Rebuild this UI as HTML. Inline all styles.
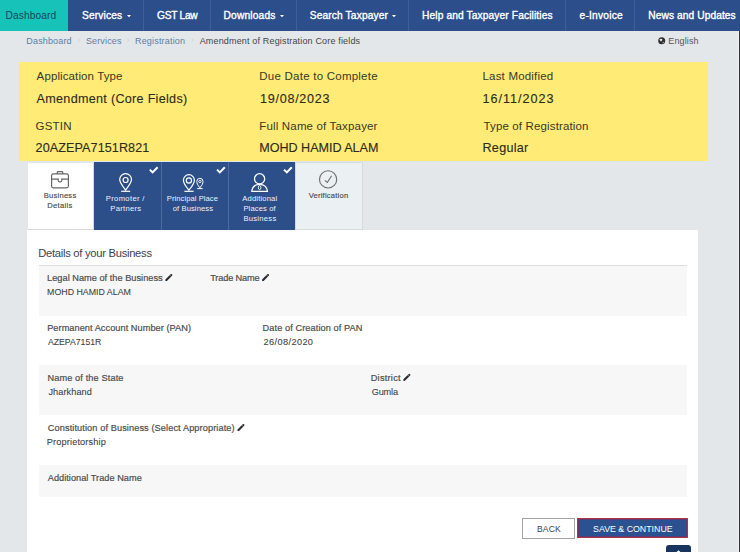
<!DOCTYPE html>
<html><head><meta charset="utf-8">
<style>
html,body{margin:0;padding:0;}
body{width:740px;height:556px;background:#fff;position:relative;overflow:hidden;font-family:"Liberation Sans",sans-serif;}
.a{position:absolute;}
.t{position:absolute;white-space:nowrap;line-height:1;font-family:"Liberation Sans",sans-serif;}
svg{position:absolute;overflow:visible;}
</style></head>
<body>
<!-- page bg -->
<div class="a" style="left:0;top:0;width:738px;height:552px;background:#e4e7ea"></div>
<div class="a" style="left:738px;top:31px;width:1px;height:521px;background:#eef0f2"></div><div class="a" style="left:739px;top:31px;width:1px;height:521px;background:#303236"></div>
<!-- nav -->
<div class="a" style="left:0;top:0;width:740px;height:31px;background:#2c4f8b"></div>
<div class="a" style="left:0;top:0;width:68px;height:31px;background:#17c3b9"></div>
<div class="a" style="left:143px;top:0;width:1px;height:31px;background:#3f5f97"></div>
<div class="a" style="left:210px;top:0;width:1px;height:31px;background:#3f5f97"></div>
<div class="a" style="left:296px;top:0;width:1px;height:31px;background:#3f5f97"></div>
<div class="a" style="left:408px;top:0;width:1px;height:31px;background:#3f5f97"></div>
<div class="a" style="left:565px;top:0;width:1px;height:31px;background:#3f5f97"></div>
<div class="a" style="left:634px;top:0;width:1px;height:31px;background:#3f5f97"></div>
<svg style="left:0;top:0" width="740" height="31">
<path d="M127 15 L131 15 L129 17.2 Z" fill="#fff"/>
<path d="M280 15 L284 15 L282 17.2 Z" fill="#fff"/>
<path d="M392 15 L396 15 L394 17.2 Z" fill="#fff"/>
</svg>
<!-- breadcrumb separators -->
<div class="t" style="left:77.5px;top:35.5px;font-size:9px;color:#cfd3d6">›</div>
<div class="t" style="left:126.5px;top:35.5px;font-size:9px;color:#cfd3d6">›</div>
<div class="t" style="left:191px;top:35.5px;font-size:9px;color:#cfd3d6">›</div>
<!-- globe -->
<svg style="left:0;top:0" width="740" height="60">
<circle cx="661.7" cy="40.7" r="3.5" fill="#2e2e2e"/>
<path d="M659.4 39.2 Q660.6 38.2 662.4 39 Q662.2 40.6 661.2 41.4 Q660 41.3 659.4 39.2 Z" fill="#e8e8e8"/>
<path d="M662.6 42 Q663.6 41.6 664.4 42.4 Q663.8 43.4 662.8 43.6 Z" fill="#9a9a9a"/>
</svg>
<!-- yellow box -->
<div class="a" style="left:19px;top:62px;width:688.5px;height:99px;background:#ffeb76"></div>
<!-- tabs -->
<div class="a" style="left:27px;top:162px;width:67px;height:68px;background:#fff;box-shadow:inset 1px 1px 0 0 #e6e6e6, inset -1px -1px 0 0 #dadada"></div>
<div class="a" style="left:94px;top:162px;width:201px;height:68px;background:#2c4e89"></div>
<div class="a" style="left:161px;top:162px;width:1px;height:68px;background:#4d6ba0"></div>
<div class="a" style="left:228px;top:162px;width:1px;height:68px;background:#4d6ba0"></div>
<div class="a" style="left:295px;top:162px;width:68px;height:68px;background:#ebf0f2;box-shadow:inset 0 0 0 1px #d6dadd"></div>
<!-- card -->
<div class="a" style="left:27px;top:230px;width:671px;height:322px;background:#fff"></div>
<div class="a" style="left:39px;top:265px;width:647.5px;height:50.5px;background:#f7f7f7;border-top:1px solid #dddddd;box-sizing:border-box"></div>
<div class="a" style="left:39px;top:365px;width:647.5px;height:50px;background:#f7f7f7"></div>
<div class="a" style="left:39px;top:465px;width:647.5px;height:32px;background:#f7f7f7"></div>
<!-- buttons -->
<div class="a" style="left:522px;top:518px;width:53px;height:21px;background:#fff;border:1px solid #a3a3a3;box-sizing:border-box"></div>
<div class="a" style="left:577px;top:518px;width:111px;height:20px;background:#2b5190;border:1.5px solid #ad3350;box-shadow:inset 0 0 0 1px #5c3a6c;box-sizing:border-box"></div>
<!-- scroll top -->
<svg style="left:0;top:0" width="740" height="556">
<path d="M666 552 L666 548 Q666 545 669 545 L688 545 Q691 545 691 548 L691 552 Z" fill="#1a3460"/>
<path d="M676.6 552 L678.5 550.2 L680.4 552 Z" fill="#fff"/>
</svg>
<!-- icons -->
<svg style="left:0;top:0" width="740" height="556">
 <!-- briefcase -->
 <g fill="none" stroke="#666" stroke-width="1.2">
  <rect x="51.6" y="173.9" width="16.8" height="14" rx="1.8"/>
  <path d="M57.3 173.9 V172.1 Q57.3 171.6 57.8 171.6 H62.2 Q62.7 171.6 62.7 172.1 V173.9"/>
  <path d="M51.6 179.1 H58.2 M61.8 179.1 H68.4"/>
  <path d="M58.2 178.6 V180.6 Q58.2 181.8 59.4 181.8 H60.6 Q61.8 181.8 61.8 180.6 V178.6"/>
 </g>
 <!-- pin 1 -->
 <g fill="none" stroke="#fff" stroke-width="1.2">
  <path d="M125.6 190.2 C121.4 184.8 119.7 182.3 119.7 179.6 A5.9 5.9 0 0 1 131.5 179.6 C131.5 182.3 129.8 184.8 125.6 190.2 Z"/>
  <circle cx="125.6" cy="180" r="2.5"/>
  <path d="M121.2 191.3 H130.2"/>
 </g>
 <!-- pins 2 -->
 <g fill="none" stroke="#fff" stroke-width="1.2">
  <path d="M188.9 190.2 C184.8 185.2 183.4 182.8 183.4 180.2 A5.5 5.5 0 0 1 194.4 180.2 C194.4 182.8 193 185.2 188.9 190.2 Z"/>
  <circle cx="188.9" cy="180.5" r="2.6"/>
  <path d="M184.4 191.3 H193.6"/>
  <path d="M199.9 187.8 C197.5 184.8 196.8 183.4 196.8 181.4 A3.1 3.1 0 0 1 203 181.4 C203 183.4 202.3 184.8 199.9 187.8 Z" stroke-width="1"/>
  <circle cx="199.9" cy="181.5" r="1.2" stroke-width="0.9"/>
  <path d="M197.2 188.6 H202.6" stroke-width="1"/>
 </g>
 <!-- person -->
 <g fill="none" stroke="#fff" stroke-width="1.3">
  <circle cx="259.6" cy="178.8" r="5.1"/>
  <path d="M251.8 191.3 C252.3 187 255.2 184.3 259.6 184.3 C264 184.3 266.9 187 267.4 191.3 Z"/>
  <ellipse cx="259.6" cy="187.6" rx="1.3" ry="2" stroke-width="0.9"/>
 </g>
 <!-- circle check -->
 <g fill="none" stroke="#6c6c6c" stroke-width="1.1">
  <circle cx="328.1" cy="179.4" r="8.6"/>
  <path d="M324.8 180.3 L327.3 182.5 L331.6 175.8"/>
 </g>
 <!-- ticks -->
 <g fill="none" stroke="#fff" stroke-width="2" stroke-linecap="butt">
  <path d="M149.8 169.6 L152.6 172.4 L157.6 167.2"/>
  <path d="M217 169.6 L219.8 172.4 L224.8 167.2"/>
  <path d="M284 169.6 L286.8 172.4 L291.8 167.2"/>
 </g>
 <!-- pencils -->
 <g transform="translate(0,0)"><path d="M166.4 279.9 L171.3 275" stroke="#2b2b2b" stroke-width="2.1" stroke-linecap="round"/><path d="M165.4 281 L166.9 280.4 L166 279.5 Z" fill="#2b2b2b"/><path d="M169.9 275.2 L171.2 276.5" stroke="#f7f7f7" stroke-width="0.5"/></g>
 <g transform="translate(96.7,0)"><path d="M166.4 279.9 L171.3 275" stroke="#2b2b2b" stroke-width="2.1" stroke-linecap="round"/><path d="M165.4 281 L166.9 280.4 L166 279.5 Z" fill="#2b2b2b"/><path d="M169.9 275.2 L171.2 276.5" stroke="#f7f7f7" stroke-width="0.5"/></g>
 <g transform="translate(238,99.9)"><path d="M166.4 279.9 L171.3 275" stroke="#2b2b2b" stroke-width="2.1" stroke-linecap="round"/><path d="M165.4 281 L166.9 280.4 L166 279.5 Z" fill="#2b2b2b"/><path d="M169.9 275.2 L171.2 276.5" stroke="#f7f7f7" stroke-width="0.5"/></g>
 <g transform="translate(72.1,150)"><path d="M166.4 279.9 L171.3 275" stroke="#2b2b2b" stroke-width="2.1" stroke-linecap="round"/><path d="M165.4 281 L166.9 280.4 L166 279.5 Z" fill="#2b2b2b"/><path d="M169.9 275.2 L171.2 276.5" stroke="#f7f7f7" stroke-width="0.5"/></g>
</svg>
<div class='t' style='left:5.60px;top:11.00px;font-size:10.2px;color:#0e4a5a;letter-spacing:0.088px;font-weight:normal;'>Dashboard</div>
<div class='t' style='left:82.00px;top:11.00px;font-size:10.2px;color:#ffffff;letter-spacing:0.143px;font-weight:normal;-webkit-text-stroke:0.35px #fff;'>Services</div>
<div class='t' style='left:157.00px;top:11.00px;font-size:10.2px;color:#ffffff;letter-spacing:-0.267px;font-weight:normal;-webkit-text-stroke:0.35px #fff;'>GST Law</div>
<div class='t' style='left:223.50px;top:11.00px;font-size:10.2px;color:#ffffff;letter-spacing:0.188px;font-weight:normal;-webkit-text-stroke:0.35px #fff;'>Downloads</div>
<div class='t' style='left:309.70px;top:11.00px;font-size:10.2px;color:#ffffff;letter-spacing:0.143px;font-weight:normal;-webkit-text-stroke:0.35px #fff;'>Search Taxpayer</div>
<div class='t' style='left:422.00px;top:11.00px;font-size:10.2px;color:#ffffff;letter-spacing:0.122px;font-weight:normal;-webkit-text-stroke:0.35px #fff;'>Help and Taxpayer Facilities</div>
<div class='t' style='left:579.50px;top:11.00px;font-size:10.2px;color:#ffffff;letter-spacing:0.225px;font-weight:normal;-webkit-text-stroke:0.35px #fff;'>e-Invoice</div>
<div class='t' style='left:648.30px;top:11.00px;font-size:10.2px;color:#ffffff;letter-spacing:0.087px;font-weight:normal;-webkit-text-stroke:0.35px #fff;'>News and Updates</div>
<div class='t' style='left:26.30px;top:37.00px;font-size:9px;color:#5d7da8;letter-spacing:0.162px;font-weight:normal;'>Dashboard</div>
<div class='t' style='left:85.90px;top:37.00px;font-size:9px;color:#5d7da8;letter-spacing:0.157px;font-weight:normal;'>Services</div>
<div class='t' style='left:135.00px;top:37.00px;font-size:9px;color:#5d7da8;letter-spacing:0.182px;font-weight:normal;'>Registration</div>
<div class='t' style='left:199.70px;top:37.00px;font-size:9px;color:#444;letter-spacing:0.161px;font-weight:normal;'>Amendment of Registration Core fields</div>
<div class='t' style='left:668.30px;top:37.00px;font-size:9px;color:#555;letter-spacing:0.133px;font-weight:normal;'>English</div>
<div class='t' style='left:36.60px;top:71.00px;font-size:11.5px;color:#3a3728;letter-spacing:0.113px;font-weight:normal;'>Application Type</div>
<div class='t' style='left:259.30px;top:71.00px;font-size:11.5px;color:#3a3728;letter-spacing:0.237px;font-weight:normal;'>Due Date to Complete</div>
<div class='t' style='left:482.50px;top:71.00px;font-size:11.5px;color:#3a3728;letter-spacing:0.192px;font-weight:normal;'>Last Modified</div>
<div class='t' style='left:35.60px;top:121.00px;font-size:11.5px;color:#3a3728;letter-spacing:0.200px;font-weight:normal;'>GSTIN</div>
<div class='t' style='left:259.30px;top:121.00px;font-size:11.5px;color:#3a3728;letter-spacing:0.165px;font-weight:normal;'>Full Name of Taxpayer</div>
<div class='t' style='left:483.50px;top:121.00px;font-size:11.5px;color:#3a3728;letter-spacing:0.142px;font-weight:normal;'>Type of Registration</div>
<div class='t' style='left:36.60px;top:93.00px;font-size:12.6px;color:#2e2b1e;letter-spacing:0.291px;font-weight:normal;-webkit-text-stroke:0.12px #2e2b1e;'>Amendment (Core Fields)</div>
<div class='t' style='left:259.90px;top:93.00px;font-size:12.6px;color:#2e2b1e;letter-spacing:0.744px;font-weight:normal;-webkit-text-stroke:0.12px #2e2b1e;'>19/08/2023</div>
<div class='t' style='left:482.50px;top:93.00px;font-size:12.6px;color:#2e2b1e;letter-spacing:0.978px;font-weight:normal;-webkit-text-stroke:0.12px #2e2b1e;'>16/11/2023</div>
<div class='t' style='left:35.60px;top:142.00px;font-size:12.6px;color:#2e2b1e;letter-spacing:0.086px;font-weight:normal;-webkit-text-stroke:0.12px #2e2b1e;'>20AZEPA7151R821</div>
<div class='t' style='left:259.30px;top:142.00px;font-size:12.6px;color:#2e2b1e;letter-spacing:-0.036px;font-weight:normal;-webkit-text-stroke:0.12px #2e2b1e;'>MOHD HAMID ALAM</div>
<div class='t' style='left:482.50px;top:142.00px;font-size:12.6px;color:#2e2b1e;letter-spacing:0.267px;font-weight:normal;-webkit-text-stroke:0.12px #2e2b1e;'>Regular</div>
<div class='t' style='left:43.70px;top:192.00px;font-size:7.6px;color:#4a4a4a;letter-spacing:0.243px;font-weight:normal;-webkit-text-stroke:0.15px #4a4a4a;'>Business</div>
<div class='t' style='left:47.30px;top:202.00px;font-size:7.6px;color:#4a4a4a;letter-spacing:0.283px;font-weight:normal;-webkit-text-stroke:0.15px #4a4a4a;'>Details</div>
<div class='t' style='left:105.80px;top:195.00px;font-size:7.6px;color:#eef3fc;letter-spacing:0.356px;font-weight:normal;'>Promoter /</div>
<div class='t' style='left:110.30px;top:205.00px;font-size:7.6px;color:#eef3fc;letter-spacing:0.300px;font-weight:normal;'>Partners</div>
<div class='t' style='left:166.80px;top:195.00px;font-size:7.6px;color:#eef3fc;letter-spacing:0.064px;font-weight:normal;'>Principal Place</div>
<div class='t' style='left:172.80px;top:205.00px;font-size:7.6px;color:#eef3fc;letter-spacing:0.090px;font-weight:normal;'>of Business</div>
<div class='t' style='left:242.30px;top:195.00px;font-size:7.6px;color:#eef3fc;letter-spacing:0.167px;font-weight:normal;'>Additional</div>
<div class='t' style='left:243.40px;top:205.00px;font-size:7.6px;color:#eef3fc;letter-spacing:0.125px;font-weight:normal;'>Places of</div>
<div class='t' style='left:243.40px;top:215.00px;font-size:7.6px;color:#eef3fc;letter-spacing:0.286px;font-weight:normal;'>Business</div>
<div class='t' style='left:308.70px;top:192.00px;font-size:7.6px;color:#4a4a4a;letter-spacing:0.209px;font-weight:normal;-webkit-text-stroke:0.15px #4a4a4a;'>Verification</div>
<div class='t' style='left:38.20px;top:248.00px;font-size:11.2px;color:#3b4350;letter-spacing:-0.270px;font-weight:normal;'>Details of your Business</div>
<div class='t' style='left:47.10px;top:274.00px;font-size:9.2px;color:#4d4d4d;letter-spacing:0.024px;font-weight:normal;-webkit-text-stroke:0.2px #4d4d4d;'>Legal Name of the Business</div>
<div class='t' style='left:210.20px;top:274.00px;font-size:9.2px;color:#4d4d4d;letter-spacing:-0.133px;font-weight:normal;-webkit-text-stroke:0.2px #4d4d4d;'>Trade Name</div>
<div class='t' style='left:47.10px;top:288.00px;font-size:9.2px;color:#404040;letter-spacing:0.000px;font-weight:normal;transform:scaleX(0.9605);transform-origin:1px 0;-webkit-text-stroke:0.08px #404040;'>MOHD HAMID ALAM</div>
<div class='t' style='left:47.20px;top:324.00px;font-size:9.2px;color:#4d4d4d;letter-spacing:0.052px;font-weight:normal;-webkit-text-stroke:0.2px #4d4d4d;'>Permanent Account Number (PAN)</div>
<div class='t' style='left:48.20px;top:338.00px;font-size:9.2px;color:#404040;letter-spacing:0.000px;font-weight:normal;transform:scaleX(0.9429);transform-origin:0px 0;-webkit-text-stroke:0.08px #404040;'>AZEPA7151R</div>
<div class='t' style='left:262.60px;top:324.00px;font-size:9.2px;color:#4d4d4d;letter-spacing:0.091px;font-weight:normal;-webkit-text-stroke:0.2px #4d4d4d;'>Date of Creation of PAN</div>
<div class='t' style='left:263.60px;top:338.00px;font-size:9.2px;color:#404040;letter-spacing:0.378px;font-weight:normal;-webkit-text-stroke:0.08px #404040;'>26/08/2020</div>
<div class='t' style='left:47.40px;top:374.00px;font-size:9.2px;color:#4d4d4d;letter-spacing:0.125px;font-weight:normal;-webkit-text-stroke:0.2px #4d4d4d;'>Name of the State</div>
<div class='t' style='left:48.40px;top:388.00px;font-size:9.2px;color:#404040;letter-spacing:0.075px;font-weight:normal;-webkit-text-stroke:0.08px #404040;'>Jharkhand</div>
<div class='t' style='left:370.70px;top:374.00px;font-size:9.2px;color:#4d4d4d;letter-spacing:0.257px;font-weight:normal;-webkit-text-stroke:0.2px #4d4d4d;'>District</div>
<div class='t' style='left:371.70px;top:388.00px;font-size:9.2px;color:#404040;letter-spacing:-0.175px;font-weight:normal;-webkit-text-stroke:0.08px #404040;'>Gumla</div>
<div class='t' style='left:47.80px;top:424.00px;font-size:9.2px;color:#4d4d4d;letter-spacing:0.102px;font-weight:normal;-webkit-text-stroke:0.2px #4d4d4d;'>Constitution of Business (Select Appropriate)</div>
<div class='t' style='left:46.80px;top:438.00px;font-size:9.2px;color:#404040;letter-spacing:0.138px;font-weight:normal;-webkit-text-stroke:0.08px #404040;'>Proprietorship</div>
<div class='t' style='left:47.80px;top:474.00px;font-size:9.2px;color:#4d4d4d;letter-spacing:0.025px;font-weight:normal;-webkit-text-stroke:0.2px #4d4d4d;'>Additional Trade Name</div>
<div class='t' style='left:536.70px;top:524.00px;font-size:9.7px;color:#444;letter-spacing:0.000px;font-weight:normal;transform:scaleX(0.8920);transform-origin:1px 0;'>BACK</div>
<div class='t' style='left:592.60px;top:524.00px;font-size:9.7px;color:#fff;letter-spacing:0.000px;font-weight:normal;transform:scaleX(0.9081);transform-origin:1px 0;'>SAVE &amp; CONTINUE</div>
</body></html>
